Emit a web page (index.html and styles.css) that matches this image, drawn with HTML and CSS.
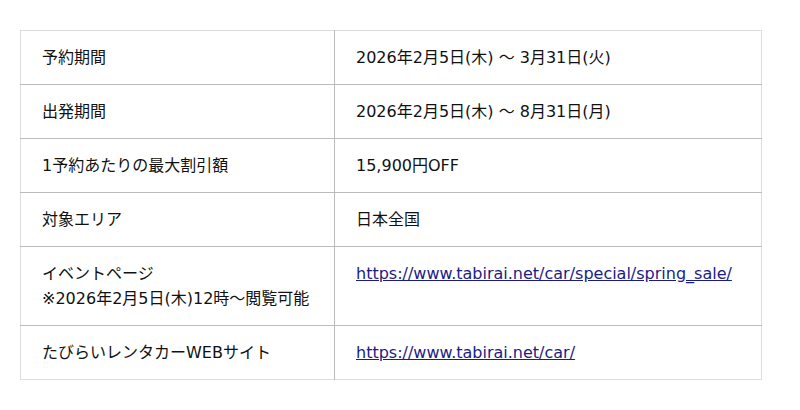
FILE: index.html
```html
<!DOCTYPE html>
<html lang="ja">
<head>
<meta charset="utf-8">
<link rel="stylesheet" href="styles.css">
</head>
<body>
<div class="wrap">
<table class="info">
<tr><td class="label">予約期間</td><td class="value">2026年2月5日(木) ～ 3月31日(火)</td></tr>
<tr><td class="label">出発期間</td><td class="value">2026年2月5日(木) ～ 8月31日(月)</td></tr>
<tr><td class="label">1予約あたりの最大割引額</td><td class="value">15,900円OFF</td></tr>
<tr><td class="label">対象エリア</td><td class="value">日本全国</td></tr>
<tr><td class="label">イベントページ<br>※2026年2月5日(木)12時～閲覧可能</td><td class="value"><a href="#">https://www.tabirai.net/car/special/spring_sale/</a></td></tr>
<tr><td class="label">たびらいレンタカーWEBサイト</td><td class="value"><a href="#">https://www.tabirai.net/car/</a></td></tr>
</table>
</div>
</body>
</html>
```
FILE: styles.css
```css
html, body { margin: 0; padding: 0; background: #fff; }
.wrap { padding: 30px 20px; }
.info {
  border-collapse: collapse;
  width: 742px;
  font-family: "DejaVu Sans", "Noto Sans CJK JP", sans-serif;
  font-size: 16px;
  line-height: 25px;
  color: #111;
  border: 1px solid #ddd;
}
.info td {
  border-top: 1px solid #bbb;
  padding: 14px 21px;
  vertical-align: top;
  text-align: left;
}
.info tr:first-child td { border-top: 1px solid #ddd; }
.info td.label { width: 271px; border-right: 1px solid #bbb; }
.info a { color: #1c1c86; }
```
